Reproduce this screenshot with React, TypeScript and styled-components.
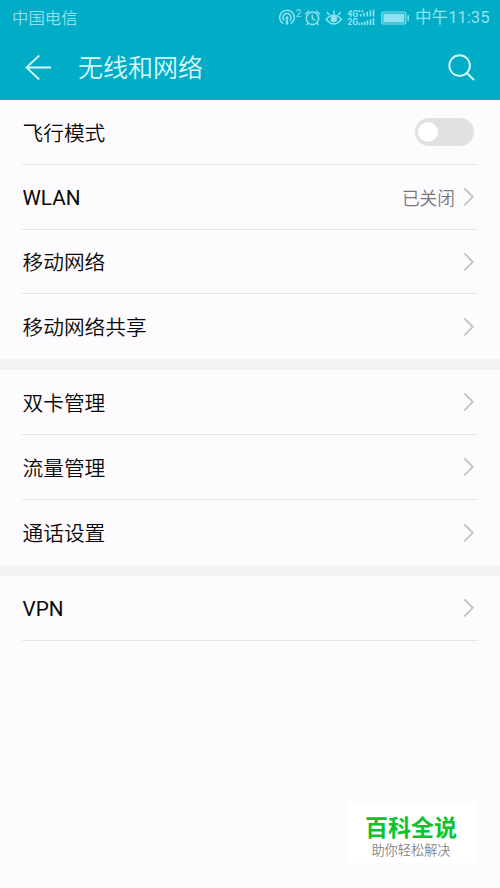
import React from "react";
import styled, { createGlobalStyle } from "styled-components";

const GlobalStyle = createGlobalStyle`
  * { box-sizing: border-box; }
  html, body { margin: 0; padding: 0; background: #fdfbfe; }
  body { font-family: Roboto, "Noto Sans CJK SC", sans-serif; }
  svg { display: block; flex: none; }
`;

const Screen = styled.div`
  position: relative;
  width: 500px;
  height: 888px;
  overflow: hidden;
  background: #fdfbfe;
`;

const Header = styled.header`
  height: 100px;
  background: #00acc6;
`;

const StatusBar = styled.div`
  height: 35px;
  padding: 0 11px 0 12px;
  display: flex;
  align-items: center;
  justify-content: space-between;
  color: #8fe3ee;
`;

const Carrier = styled.span`
  padding-top: 2px;
  font-size: 16.4px;
  font-weight: 350;
  line-height: 33px;
`;

const StatusIcons = styled.div`
  display: flex;
  align-items: center;
`;

const Clock = styled.span`
  width: 74px;
  margin-left: 5px;
  padding-top: 1px;
  font-size: 16.6px;
  font-weight: 400;
  line-height: 34px;
  white-space: nowrap;
`;

const TitleBar = styled.div`
  height: 65px;
  padding: 0 24px;
  display: flex;
  align-items: center;
`;

const Title = styled.h1`
  flex: 1;
  margin: 0 0 0 26px;
  padding-top: 3px;
  font-size: 25px;
  line-height: 62px;
  font-weight: 350;
  color: #d8fbfd;
`;

const Group = styled.section`
  & + & { border-top: 11px solid #f3f2f4; }
`;

const Row = styled.div<{ $height: number; $last?: boolean }>`
  height: ${(p) => p.$height}px;
  margin: 0 22px;
  padding: 0 3px 0 0.5px;
  display: flex;
  align-items: center;
  border-bottom: ${(p) => (p.$last ? "0" : "1px solid #e5e4e6")};
`;

const Label = styled.span<{ $latin?: boolean }>`
  flex: 1;
  padding-top: ${(p) => (p.$latin ? 1 : 3)}px;
  font-size: 20.7px;
  font-weight: ${(p) => (p.$latin ? 400 : 350)};
  line-height: 30px;
  color: #080808;
`;

const Value = styled.span`
  padding-top: 3px;
  margin-right: 8px;
  font-size: 17.7px;
  font-weight: 350;
  line-height: 26px;
  color: #777779;
`;

const Toggle = styled.span`
  width: 59px;
  height: 28px;
  margin-right: 1px;
  padding: 4px 3px;
  border-radius: 14px;
  background: #e1e0e2;
`;

const Knob = styled.span`
  display: block;
  width: 20px;
  height: 20px;
  border-radius: 50%;
  background: #fff;
`;

const Watermark = styled.aside`
  position: absolute;
  left: 349px;
  top: 802px;
  width: 126px;
  height: 61px;
  display: flex;
  flex-direction: column;
  align-items: center;
  padding: 13px 2px 0 0;
  background: #fff;
`;

const Brand = styled.strong`
  font-size: 23px;
  line-height: 28px;
  font-weight: 700;
  color: #0bc42c;
`;

const Slogan = styled.span`
  font-size: 13.2px;
  font-weight: 350;
  line-height: 15px;
  color: #858585;
`;

const Chevron = () => (
  <svg width="12" height="20" viewBox="0 0 12 20" fill="none" stroke="#c2c1c4" strokeWidth="1.8">
    <path d="M1.3 1.3 9.8 9.8 1.3 18.3" />
  </svg>
);

const StatusGlyphs = () => (
  <svg width="131" height="24" viewBox="279 5 131 24" fill="none" stroke="#8fe3ee" strokeWidth="1.5">
    <path d="M283.2 22.7a7.3 7.3 0 1 1 7.6 0M284.4 19.6a4 4 0 1 1 5.2 0" />
    <circle cx="287" cy="16.8" r="1.5" fill="#8fe3ee" stroke="none" />
    <path d="M285.5 23.5 286.3 18h1.4l.8 5.5z" fill="#8fe3ee" stroke="none" />
    <text x="295.8" y="16.2" fontSize="10" fill="#8fe3ee" stroke="none">2</text>
    <circle cx="312.5" cy="17.3" r="6.2" />
    <path d="M305.2 13.2 309 9.8M319.8 13.2 316 9.8M312.3 13.5v4.3l3 1.5M308.2 22l-1.7 2M316.8 22l1.7 2" strokeWidth="1.4" />
    <path d="M326.2 18.3q7.6-8 15.2 0-7.6 9.6-15.2 0z" />
    <circle cx="333.8" cy="18" r="3.2" fill="#8fe3ee" stroke="none" />
    <path d="M333.8 13.5V9.6M329.4 14.2 327 11M338.2 14.2l2.4-3.2" strokeWidth="1.4" />
    <g fill="#8fe3ee" stroke="none" fontSize="8.8" fontWeight="700">
      <text x="347.3" y="15.5" textLength="11" lengthAdjust="spacingAndGlyphs">4G</text>
      <text x="347.3" y="24" textLength="11" lengthAdjust="spacingAndGlyphs">2G</text>
    </g>
    <path d="M359.4 9v2.3M362.4 9v2.3M360.7 13v2.5M364 12v3.5M367.2 10.8v4.7M370.4 9.6v5.9M373.5 8.7v6.8M359.4 22v2M362 21.3V24M364.7 20.5V24M367.5 19.3V24M370.5 18.2V24M373.5 17.3V24" strokeWidth="1.6" />
    <rect x="381.8" y="11" width="24" height="12" rx="1.5" strokeWidth="1.1" />
    <rect x="383.3" y="12.6" width="21" height="8.9" fill="#8fe3ee" stroke="none" />
    <path d="M408.2 14.2v5.6" strokeWidth="1.5" />
  </svg>
);

interface Item {
  label: string;
  height: number;
  latin?: boolean;
  value?: string;
  toggle?: boolean;
  last?: boolean;
}

const groups: Item[][] = [
  [
    { label: "飞行模式", height: 65, toggle: true },
    { label: "WLAN", height: 65, latin: true, value: "已关闭" },
    { label: "移动网络", height: 64 },
    { label: "移动网络共享", height: 65, last: true },
  ],
  [
    { label: "双卡管理", height: 65 },
    { label: "流量管理", height: 65 },
    { label: "通话设置", height: 65, last: true },
  ],
  [{ label: "VPN", height: 65, latin: true }],
];

export default function App() {
  return (
    <>
      <GlobalStyle />
      <Screen>
        <Header>
          <StatusBar>
            <Carrier>中国电信</Carrier>
            <StatusIcons>
              <StatusGlyphs />
              <Clock>中午11:35</Clock>
            </StatusIcons>
          </StatusBar>
          <TitleBar>
            <svg width="28" height="28" viewBox="0 0 28 28" fill="none" stroke="#d8fbfd" strokeWidth="1.8">
              <path d="M27 13.5H3M15.2 1.5 2.5 13.5l12.7 12" />
            </svg>
            <Title>无线和网络</Title>
            <svg width="28" height="28" viewBox="0 0 28 28" fill="none" stroke="#d8fbfd" strokeWidth="1.9">
              <circle cx="11.6" cy="11.6" r="10.3" />
              <path d="m18.8 19 7.2 7" />
            </svg>
          </TitleBar>
        </Header>
        <main>
          {groups.map((items, i) => (
            <Group key={i}>
              {items.map((item) => (
                <Row key={item.label} $height={item.height} $last={item.last}>
                  <Label $latin={item.latin}>{item.label}</Label>
                  {item.value && <Value>{item.value}</Value>}
                  {item.toggle ? <Toggle role="switch" aria-checked={false}><Knob /></Toggle> : <Chevron />}
                </Row>
              ))}
            </Group>
          ))}
        </main>
        <Watermark>
          <Brand>百科全说</Brand>
          <Slogan>助你轻松解决</Slogan>
        </Watermark>
      </Screen>
    </>
  );
}
